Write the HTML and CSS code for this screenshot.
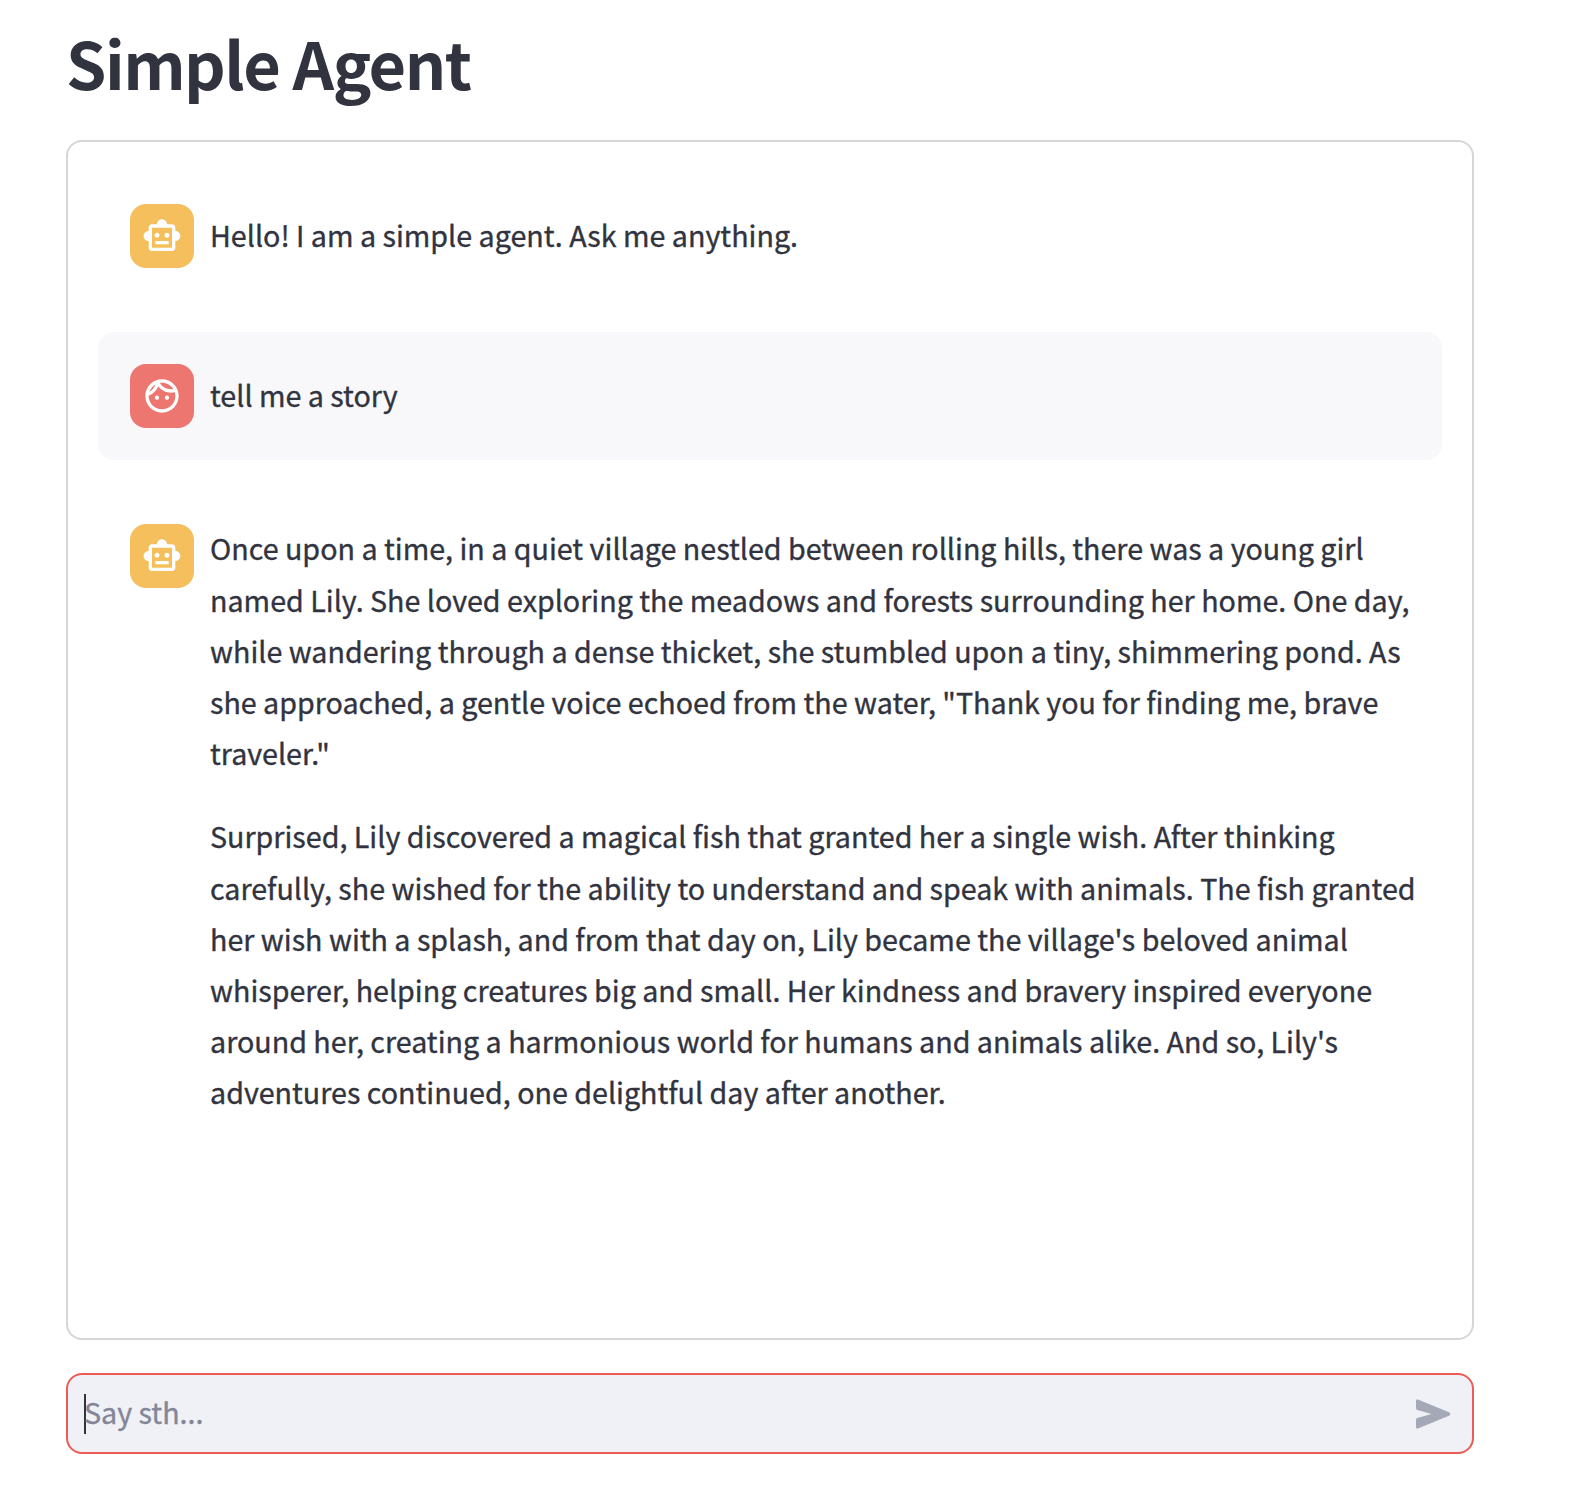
FILE: index.html
```html
<!DOCTYPE html>
<html lang="en">
<head>
<meta charset="utf-8">
<title>Simple Agent</title>
<link rel="stylesheet" href="styles.css">
</head>
<body>
<svg class="defs" aria-hidden="true">
  <symbol id="robot" viewBox="0 0 24 24"><path d="M20 9V7c0-1.1-.9-2-2-2h-3c0-1.66-1.34-3-3-3S9 3.34 9 5H6c-1.1 0-2 .9-2 2v2c-1.66 0-3 1.34-3 3s1.34 3 3 3v4c0 1.1.9 2 2 2h12c1.1 0 2-.9 2-2v-4c1.66 0 3-1.34 3-3s-1.34-3-3-3zm-2 10H6V7h12v12zm-9-6c-.83 0-1.5-.67-1.5-1.5S8.17 10 9 10s1.5.67 1.5 1.5S9.83 13 9 13zm7.5-1.5c0 .83-.67 1.5-1.5 1.5s-1.5-.67-1.5-1.5.67-1.5 1.5-1.5 1.5.67 1.5 1.5zM8 15h8v2H8v-2z"/></symbol>
</svg>
<main class="page">
  <h1 class="title">Simple Agent</h1>
  <section class="chat">
    <article class="message">
      <div class="avatar assistant"><svg class="icon"><use href="#robot"/></svg></div>
      <div class="content center"><p>Hello! I am a simple agent. Ask me anything.</p></div>
    </article>
    <article class="message user">
      <div class="avatar human"><svg class="icon" viewBox="0 0 24 24"><path d="M10.250 13c0 .69-.56 1.250-1.250 1.250S7.750 13.690 7.750 13s.56-1.250 1.250-1.250 1.250.56 1.250 1.250zM15 11.750c-.69 0-1.250.56-1.250 1.250s.56 1.250 1.250 1.250 1.250-.56 1.250-1.250-.56-1.250-1.250-1.250zm7 .25c0 5.520-4.480 10-10 10S2 17.520 2 12 6.480 2 12 2s10 4.480 10 10zM10.660 4.120C12.060 6.440 14.600 8 17.500 8c.46 0 .91-.05 1.340-.12C17.440 5.560 14.900 4 12 4c-.46 0-.91.05-1.340.12zM4.420 9.470c1.710-.97 3.030-2.550 3.660-4.440C6.370 6 5.050 7.580 4.420 9.470zM20 12c0-.78-.12-1.530-.33-2.240-.7.15-1.420.24-2.170.24-3.130 0-5.920-1.440-7.760-3.690C8.690 8.870 6.600 10.880 4 11.860c.01.04 0 .09 0 .14 0 4.410 3.590 8 8 8s8-3.590 8-8z"/></svg></div>
      <div class="content center"><p>tell me a story</p></div>
    </article>
    <article class="message">
      <div class="avatar assistant"><svg class="icon"><use href="#robot"/></svg></div>
      <div class="content">
        <p>Once upon a time, in a quiet village nestled between rolling hills, there was a young girl<br>named Lily. She loved exploring the meadows and forests surrounding her home. One day,<br>while wandering through a dense thicket, she stumbled upon a tiny, shimmering pond. As<br>she approached, a gentle voice echoed from the water, "Thank you for finding me, brave<br>traveler."</p>
        <p>Surprised, Lily discovered a magical fish that granted her a single wish. After thinking<br>carefully, she wished for the ability to understand and speak with animals. The fish granted<br>her wish with a splash, and from that day on, Lily became the village's beloved animal<br>whisperer, helping creatures big and small. Her kindness and bravery inspired everyone<br>around her, creating a harmonious world for humans and animals alike. And so, Lily's<br>adventures continued, one delightful day after another.</p>
      </div>
    </article>
  </section>
  <div class="composer">
    <span class="caret"></span>
    <span class="placeholder">Say sth...</span>
    <svg class="send" viewBox="0 0 36 30"><path d="M0 1.500Q0-.5 2 .2L34 13.200Q36.500 15 34 16.800L2 29.800Q0 30.500 0 28.500V20.600Q0 19.300 1.300 19L16 15 1.300 11Q0 10.700 0 9.400Z"/></svg>
  </div>
</main>
</body>
</html>
```
FILE: styles.css
```css
* { box-sizing: border-box; }
body {
  margin: 0;
  background: #fff;
  color: #31333f;
  font-family: "Noto Sans CJK SC", "Noto Sans", sans-serif;
  font-size: 28.66px;
  line-height: 51.2px;
  -webkit-text-stroke: 0.35px currentColor;
}
.defs { display: none; }
.page { width: 1408px; margin-left: 66px; }
.title {
  margin: 0;
  height: 140px;
  padding-top: 19px;
  font-size: 64.8px;
  font-weight: 700;
  line-height: 86px;
  letter-spacing: -1.5px;
  white-space: nowrap;
  -webkit-text-stroke: 0;
}
.chat {
  display: flex;
  flex-direction: column;
  gap: 32px;
  height: 1200px;
  padding: 30px;
  border: 2px solid #d5d6d8;
  border-radius: 16px;
}
.message {
  display: flex;
  gap: 16px;
  padding: 32px;
  border-radius: 16px;
}
.user { background: #f8f8fa; }
.avatar {
  display: flex;
  flex: none;
  align-items: center;
  justify-content: center;
  width: 64px;
  height: 64px;
  border-radius: 16px;
}
.assistant { background: #f5bf5d; }
.human { background: #ed7670; }
.icon { width: 40px; height: 40px; fill: #fff; }
.content {
  display: flex;
  flex-direction: column;
  gap: 32px;
  margin: -1.6px 0 1.6px;
  white-space: nowrap;
}
.center { justify-content: center; }
.content p { margin: 0; }
.composer {
  display: flex;
  align-items: center;
  height: 81px;
  margin-top: 33px;
  padding: 0 21px 0 16px;
  border: 2px solid #ee5a54;
  border-radius: 16px;
  background: #f0f1f6;
}
.caret { width: 2px; height: 40px; background: #31333f; }
.placeholder { flex: 1; margin: -4px 0 0 -2px; color: #838697; }
.send { width: 35px; height: 30px; fill: #a5a8b7; }
```
